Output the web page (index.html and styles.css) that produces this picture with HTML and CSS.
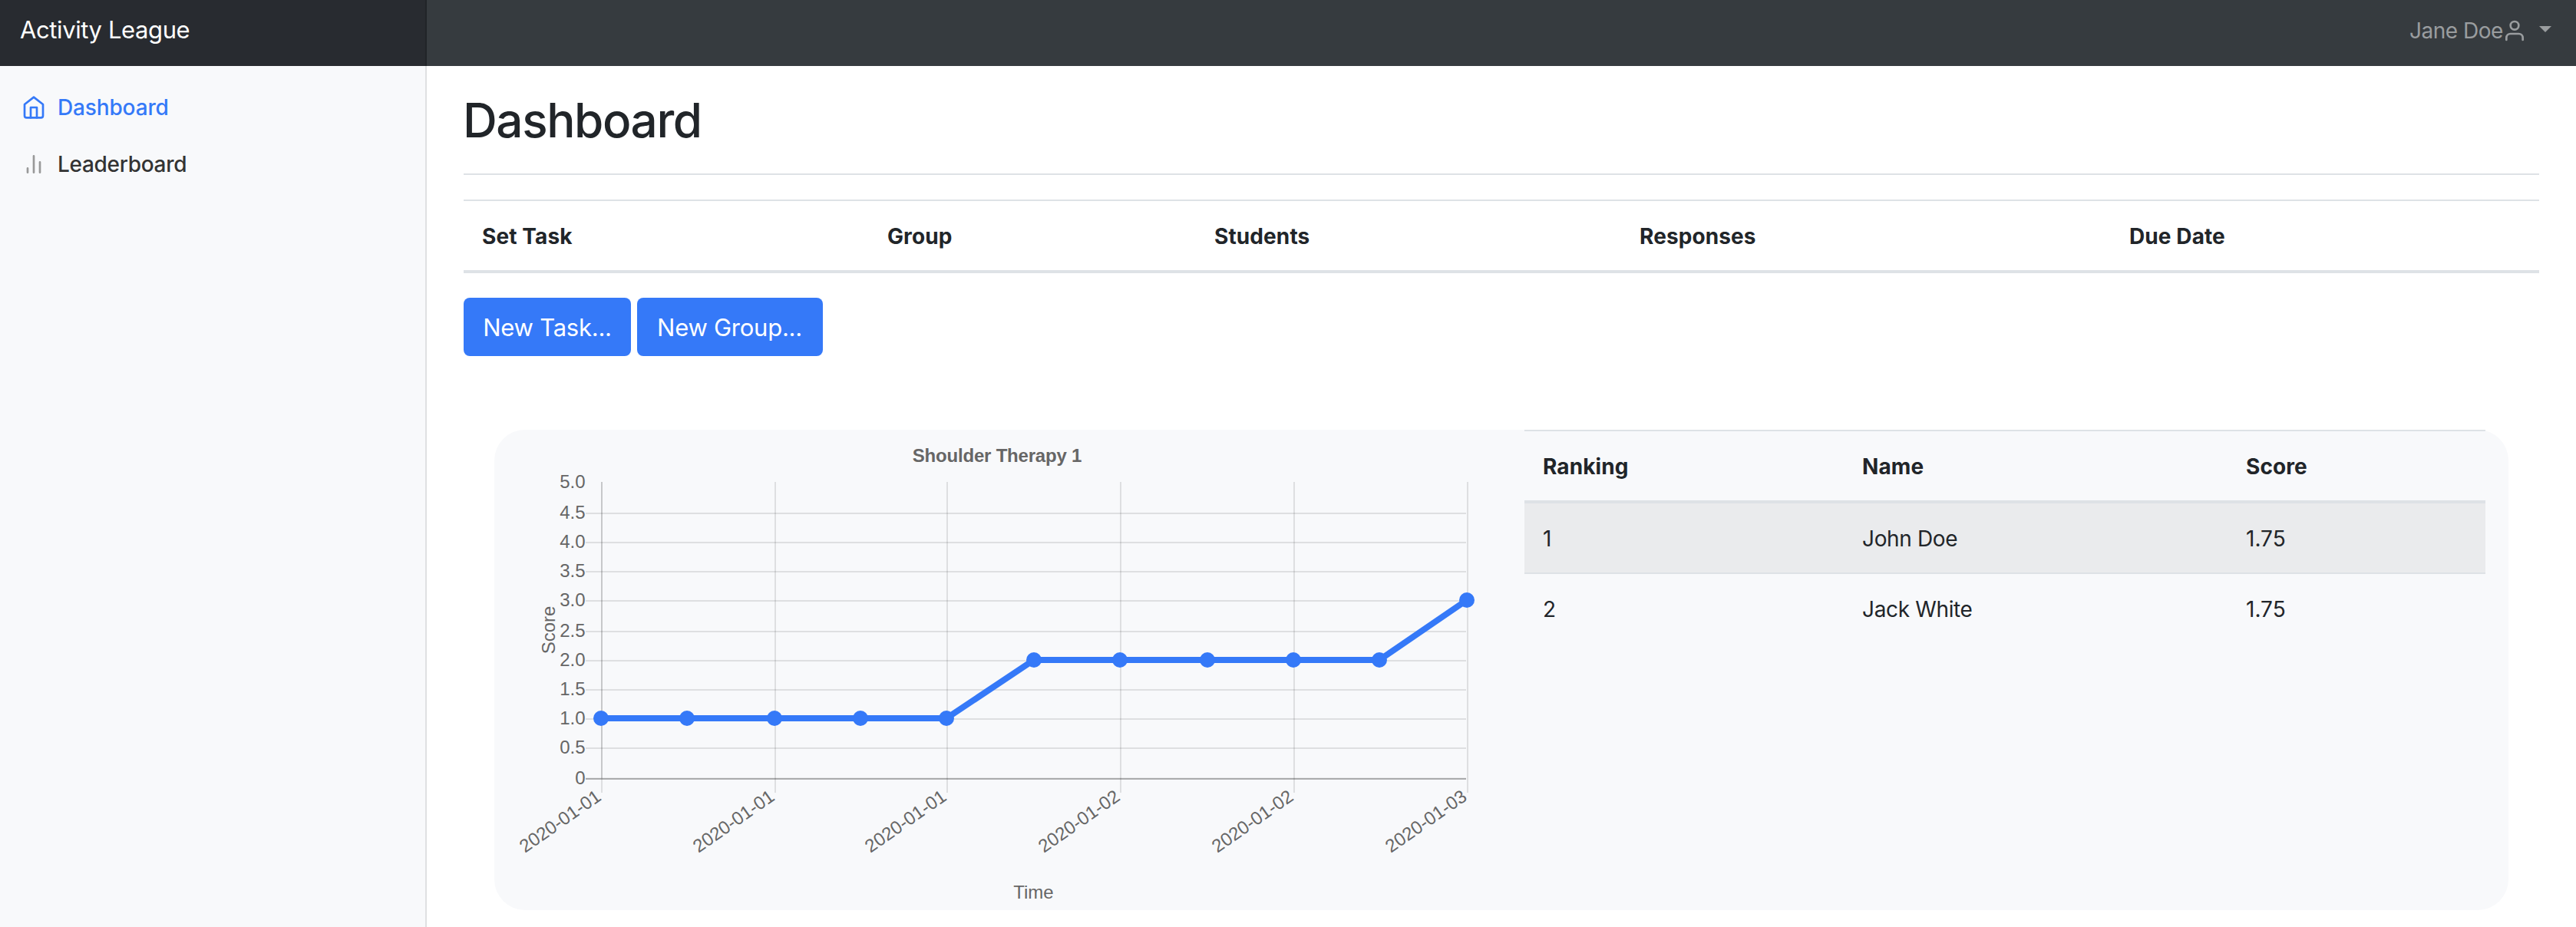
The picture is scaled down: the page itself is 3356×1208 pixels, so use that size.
FILE: index.html
```html
<!DOCTYPE html>
<html lang="en">
<head>
<meta charset="utf-8">
<title>Activity League</title>
<link rel="stylesheet" href="styles.css">
</head>
<body>
<header class="navbar">
  <a class="brand">Activity League</a>
  <a class="user">
    <span class="user-name">Jane Doe</span>
    <svg class="icon" viewBox="0 0 24 24"><path d="M20 21v-2a4 4 0 0 0-4-4H8a4 4 0 0 0-4 4v2"/><circle cx="12" cy="7" r="4"/></svg>
    <span class="caret"></span>
  </a>
</header>
<div class="layout">
  <nav class="sidebar">
    <a class="nav-link active">
      <svg class="icon" viewBox="0 0 24 24"><path d="M3 9l9-7 9 7v11a2 2 0 0 1-2 2H5a2 2 0 0 1-2-2z"/><path d="M9 22V12h6v10"/></svg>
      <span class="nav-text">Dashboard</span>
    </a>
    <a class="nav-link">
      <svg class="icon" viewBox="0 0 24 24"><path d="M18 20V10M12 20V4M6 20v-4"/></svg>
      <span class="nav-text long">Leaderboard</span>
    </a>
  </nav>
  <main class="main">
    <div class="title-bar"><h1 class="title">Dashboard</h1></div>
    <div class="table tasks">
      <div class="row head"><span>Set Task</span><span>Group</span><span>Students</span><span>Responses</span><span>Due Date</span></div>
    </div>
    <div class="buttons">
      <button class="btn task">New Task...</button>
      <button class="btn group">New Group...</button>
    </div>
    <section class="card">
      <svg class="chart" viewBox="644 560 1342 626">
        <text class="chart-title" x="1299" y="602">Shoulder Therapy 1</text>
        <path class="grid" d="M784 628V1033M1010 628V1033M1234 628V1033M1460 628V1033M1686 628V1033M1912 628V1033"/>
        <path class="grid" d="M763 669H1910M763 707H1910M763 745H1910M763 783H1910M763 823H1910M763 861H1910M763 899H1910M763 937H1910M763 975H1910M763 1014.5H1910"/>
        <path class="grid" d="M784 628V1014"/>
        <path class="zero" d="M763 1015H1910"/>
        <g class="y-labels">
          <text x="762.5" y="636">5.0</text><text x="762.5" y="676">4.5</text><text x="762.5" y="714">4.0</text><text x="762.5" y="752">3.5</text><text x="762.5" y="790">3.0</text><text x="762.5" y="830">2.5</text><text x="762.5" y="868">2.0</text><text x="762.5" y="906">1.5</text><text x="762.5" y="944">1.0</text><text x="762.5" y="982">0.5</text><text x="762.5" y="1022">0</text>
        </g>
        <g class="x-labels">
          <text transform="translate(780 1035) rotate(-35)" dy="8">2020-01-01</text>
          <text transform="translate(1006 1035) rotate(-35)" dy="8">2020-01-01</text>
          <text transform="translate(1230 1035) rotate(-35)" dy="8">2020-01-01</text>
          <text transform="translate(1456 1035) rotate(-35)" dy="8">2020-01-02</text>
          <text transform="translate(1682 1035) rotate(-35)" dy="8">2020-01-02</text>
          <text transform="translate(1908 1035) rotate(-35)" dy="8">2020-01-03</text>
        </g>
        <text class="axis-title" transform="translate(723 821) rotate(-90)">Score</text>
        <text class="axis-title" x="1346.5" y="1171">Time</text>
        <polyline class="series" points="783,936 895,936 1009,936 1121,936 1233,936 1347,860 1459,860 1573,860 1685,860 1797,860 1911,782"/>
        <g class="points"><circle cx="783" cy="936" r="10"/><circle cx="895" cy="936" r="10"/><circle cx="1009" cy="936" r="10"/><circle cx="1121" cy="936" r="10"/><circle cx="1233" cy="936" r="10"/><circle cx="1347" cy="860" r="10"/><circle cx="1459" cy="860" r="10"/><circle cx="1573" cy="860" r="10"/><circle cx="1685" cy="860" r="10"/><circle cx="1797" cy="860" r="10"/><circle cx="1911" cy="782" r="10"/></g>
      </svg>
      <div class="table ranking">
        <div class="row head"><span>Ranking</span><span>Name</span><span>Score</span></div>
        <div class="row striped"><span>1</span><span>John Doe</span><span>1.75</span></div>
        <div class="row"><span>2</span><span>Jack White</span><span>1.75</span></div>
      </div>
    </section>
  </main>
</div>
</body>
</html>
```
FILE: styles.css
```css
* { box-sizing: border-box; }
body {
  margin: 0;
  height: 1208px;
  overflow: hidden;
  display: flex;
  flex-direction: column;
  background: #fff;
  color: #212529;
  font: 400 28px/42px Inter, "Liberation Sans", sans-serif;
}
.icon {
  width: 32px;
  height: 32px;
  flex: none;
  fill: none;
  stroke: currentColor;
  stroke-width: 2;
  stroke-linecap: round;
  stroke-linejoin: round;
}
.navbar {
  height: 86px;
  flex: none;
  display: flex;
  justify-content: space-between;
  background: #363b3f;
}
.brand {
  width: 556px;
  padding: 15px 0 0 26px;
  border-right: 2px solid #212428;
  background: #282b30;
  color: #fff;
  font-size: 31px;
  line-height: 48px;
  letter-spacing: -0.4px;
}
.user {
  display: flex;
  align-items: center;
  height: 80px;
  padding-right: 32px;
  color: #9a9d9f;
}
.user-name { width: 121px; letter-spacing: -0.49px; white-space: nowrap; }
.caret {
  margin: -4px 0 0 16px;
  border: 8px solid transparent;
  border-top-color: currentColor;
  border-bottom: 0;
}
.layout { flex: 1; display: flex; min-height: 0; }
.sidebar {
  width: 556px;
  flex: none;
  padding-top: 17px;
  border-right: 2px solid #dfe0e2;
  background: #f8f9fb;
}
.nav-link {
  height: 74px;
  padding-left: 28px;
  display: flex;
  align-items: center;
  gap: 15px;
  color: #999;
  font-weight: 500;
}
.nav-text { color: #333; letter-spacing: -0.15px; }
.nav-text.long { letter-spacing: -0.3px; }
.nav-link.active, .active .nav-text { color: #3579f8; }
.main { flex: 1; padding: 0 48px; }
.title-bar { height: 142px; padding-top: 33px; border-bottom: 2px solid #dee2e6; }
.title {
  margin: 0 0 0 -1px;
  font-size: 62px;
  font-weight: 550;
  line-height: 76px;
  letter-spacing: -1.4px;
}
.row { display: grid; border-top: 2px solid #dee2e6; }
.row > span { padding: 25px 24px 23px; letter-spacing: -0.35px; }
.row > span:last-child, .row > span:only-child { letter-spacing: 0; }
.row.head { border-bottom: 4px solid #dee2e6; font-weight: 700; }
.row.head > span { letter-spacing: 0.1px; }
.row.striped { border-top: 0; background: #eaebed; }
.tasks { margin-top: 32px; }
.tasks .row { grid-template-columns: 528px 426px 554px 638px 1fr; }
.buttons { margin-top: 32px; display: flex; gap: 8px; }
.btn {
  height: 76px;
  padding: 1px 0 0;
  border: 0;
  border-radius: 8px;
  background: #3579f8;
  color: #fff;
  font: 400 31px/48px Inter, "Liberation Sans", sans-serif;
  letter-spacing: -0.25px;
}
.btn.task { width: 218px; }
.btn.group { width: 242px; padding-right: 1px; }
.card {
  height: 626px;
  margin: 96px 40px 0;
  display: flex;
  border-radius: 40px;
  background: #f8f9fb;
}
.chart { width: 1342px; height: 626px; flex: none; font: 24px "Liberation Sans", Arial, sans-serif; fill: #666; }
.chart-title { font-weight: 700; text-anchor: middle; letter-spacing: -0.2px; }
.axis-title { text-anchor: middle; }
.x-labels, .y-labels { text-anchor: end; }
.grid { fill: none; stroke: rgba(0, 0, 0, 0.1); stroke-width: 2; }
.zero { stroke: rgba(0, 0, 0, 0.25); stroke-width: 2; }
.series { fill: none; stroke: #3579f8; stroke-width: 8; }
.points { fill: #3579f8; }
.ranking { width: 1252px; }
.ranking .row { grid-template-columns: 416px 500px 1fr; }
```
